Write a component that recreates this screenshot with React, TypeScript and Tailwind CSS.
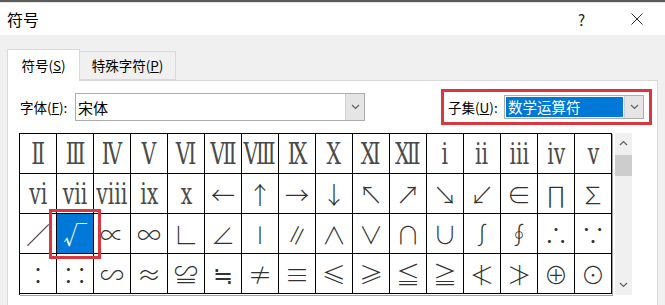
import type { FC } from 'react';

const ui = "font-['Microsoft_YaHei_UI','Noto_Sans_CJK_SC',sans-serif]";

// rows of the symbol grid, as shown by the 数学运算符 subset
const rows: string[][] = [
  ['Ⅱ', 'Ⅲ', 'Ⅳ', 'Ⅴ', 'Ⅵ', 'Ⅶ', 'Ⅷ', 'Ⅸ', 'Ⅹ', 'Ⅺ', 'Ⅻ', 'ⅰ', 'ⅱ', 'ⅲ', 'ⅳ', 'ⅴ'],
  ['ⅵ', 'ⅶ', 'ⅷ', 'ⅸ', 'ⅹ', '←', '↑', '→', '↓', '↖', '↗', '↘', '↙', '∈', '∏', '∑'],
  ['∕', '√', '∝', '∞', '∟', '∠', '∣', '∥', '∧', '∨', '∩', '∪', '∫', '∮', '∴', '∵'],
  ['∶', '∷', '∽', '≈', '≌', '≒', '≠', '≡', '≤', '≥', '≦', '≧', '≮', '≯', '⊕', '⊙'],
];

const Chevron: FC<{ up?: boolean; className?: string }> = ({ up, className = '' }) => (
  <svg className={className} width="9" height="6" viewBox="0 0 9 6" fill="none" stroke="currentColor" strokeWidth={1.2}>
    {up ? <path d="M1 5L4.5 1.5L8 5" /> : <path d="M1 1L4.5 4.5L8 1" />}
  </svg>
);

const DropButton: FC = () => (
  <div className="w-[19px] self-stretch flex items-center justify-center bg-[#e5e5e5] border-l border-[#cfcfcf] text-[#606060]">
    <Chevron />
  </div>
);

const SymbolCell: FC<{ ch: string; roman: boolean; selected: boolean }> = ({ ch, roman, selected }) => (
  <div
    className={`h-[40px] border-r border-b border-black flex items-center justify-center overflow-hidden ${
      selected ? 'bg-[#0078d7] text-white' : roman ? 'bg-white text-[#4a4a4a]' : 'bg-white text-[#333]'
    }`}
  >
    {roman ? (
      <span className="inline-block scale-x-[0.68] text-[30px] leading-none font-['DejaVu_Serif',serif]">{ch}</span>
    ) : (
      <span className="text-[24px] leading-none font-['Noto_Sans_CJK_SC',sans-serif] font-light">{ch}</span>
    )}
  </div>
);

const App: FC = () => {
  return (
    <div className={`w-[665px] h-[305px] bg-[#f0f0f0] overflow-hidden text-[#000] ${ui}`}>
      {/* window frame top edge */}
      <div className="h-[2px] bg-[#5c5c5c]" />
      <div className="h-[1px] bg-[#e3e3e3]" />

      {/* Title bar */}
      <div className="h-[32px] bg-white flex items-center pl-[7px] pr-[22px]">
        <span className="text-[16px] leading-none">符号</span>
        <div className="ml-auto flex items-center gap-[46px]">
          <span className="text-[15px] leading-none text-[#222]">?</span>
          <svg width="12" height="12" viewBox="0 0 12 12" stroke="#333" strokeWidth={1}>
            <path d="M0.5 0.5L11.5 11.5M11.5 0.5L0.5 11.5" />
          </svg>
        </div>
      </div>

      {/* Tabs */}
      <div className="flex items-end pl-[7px] pt-[13px] h-[45px]">
        <div className="h-[32px] w-[73px] bg-white border border-b-0 border-[#d9d9d9] flex items-center justify-center text-[13.5px] relative z-10 -mb-px">
          符号(<span className="underline">S</span>)
        </div>
        <div className="h-[29px] w-[96px] bg-[#f0f0f0] border border-l-0 border-[#d9d9d9] flex items-center justify-center text-[13.5px]">
          特殊字符(<span className="underline">P</span>)
        </div>
      </div>

      {/* Tab page */}
      <div className="ml-[7px] w-[651px] h-[240px] bg-white border border-[#d9d9d9]">
        <div className="flex items-center h-[52px] pl-[12px]">
          <span className="text-[13.5px] w-[55px] whitespace-nowrap">
            字体(<span className="underline">F</span>):
          </span>
          <div className="w-[290px] h-[28px] border border-[#adadad] flex items-stretch">
            <div className="flex-1 flex items-center pl-[2px] text-[15px] leading-none">宋体</div>
            <DropButton />
          </div>

          <div className="ml-[76px] w-[211px] h-[36px] border-[3px] border-[#d9363e] flex items-center pl-[4px]">
            <span className="text-[13.5px] w-[56px] whitespace-nowrap">
              子集(<span className="underline">U</span>):
            </span>
            <div className="w-[140px] h-[24px] border border-[#adadad] flex items-stretch">
              <div className="flex-1 flex items-center p-[1px]">
                <div className="w-full h-full bg-[#0078d7] text-white text-[14.5px] leading-none flex items-center pl-[2px]">
                  数学运算符
                </div>
              </div>
              <DropButton />
            </div>
          </div>
        </div>

        {/* Symbol grid + scrollbar */}
        <div className="flex pl-[11px]">
          <div className="relative border-l border-t border-black shadow-[1px_1px_0_#a0a0a0]">
            <div className="grid grid-cols-[repeat(16,37px)]">
              {rows.map((row, r) =>
                row.map((ch, c) => (
                  <SymbolCell
                    key={`${r}-${c}`}
                    ch={ch}
                    roman={r === 0 || (r === 1 && c < 5)}
                    selected={r === 2 && c === 1}
                  />
                ))
              )}
            </div>
            {/* red highlight around the √ cell */}
            <div className="absolute left-[29px] top-[75px] w-[52px] h-[50px] border-[3px] border-[#d9363e] pointer-events-none" />
          </div>

          <div className="ml-[3px] w-[17px] h-[162px] bg-[#f0f0f0] flex flex-col items-center text-[#606060]">
            <div className="h-[20px] flex items-center justify-center">
              <Chevron up />
            </div>
            <div className="w-full h-[21px] mt-[2px] bg-[#cdcdcd]" />
            <div className="flex-1" />
            <div className="h-[20px] flex items-center justify-center">
              <Chevron />
            </div>
          </div>
        </div>
      </div>
    </div>
  );
};

export default App;
